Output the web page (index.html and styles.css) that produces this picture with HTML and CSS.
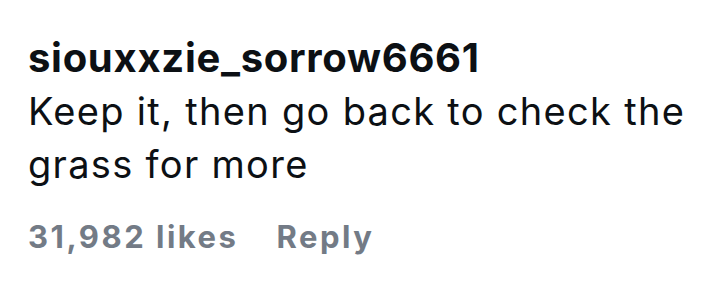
FILE: index.html
```html
<!DOCTYPE html>
<html lang="en">
<head>
    <meta charset="UTF-8">
    <title>Comment</title>
    <link rel="stylesheet" href="styles.css">
</head>
<body>
    <div class="comment">
        <div class="comment-user">siouxxzie_sorrow6661</div>
        <div class="comment-text">Keep it, then go back to check the grass for more</div>
        <div class="comment-meta">
            <span class="likes">31,982 likes</span>
            <span class="reply">Reply</span>
        </div>
    </div>
</body>
</html>
```

FILE: styles.css
```css
body {
    margin: 0;
    background: #fff;
    font-family: Inter, "Noto Sans", sans-serif;
    color: #0c1014;
}

.comment {
    padding: 34px 16px 0 28px;
}

.comment-user {
    font-size: 40px;
    font-weight: 700;
    line-height: 48px;
    letter-spacing: 0.7px;
}

.comment-text {
    margin-top: 3px;
    font-size: 38px;
    line-height: 53px;
    letter-spacing: 1.3px;
}

.comment-meta {
    display: flex;
    gap: 38px;
    margin-top: 28px;
    font-size: 31px;
    line-height: 36px;
    font-weight: 700;
    letter-spacing: 2.5px;
    color: #737b86;
}
```
